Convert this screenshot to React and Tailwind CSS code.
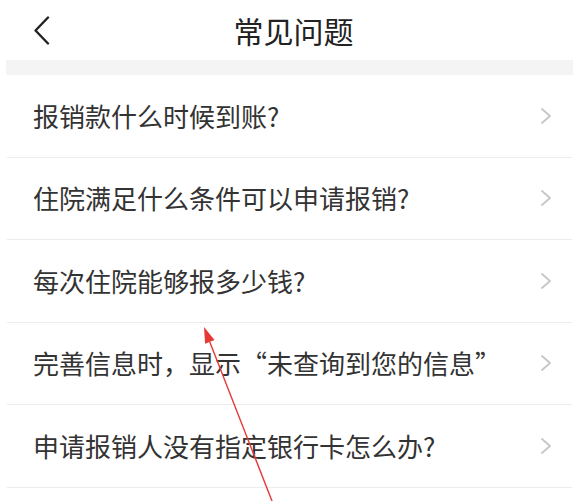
import React from "react";

const questions = [
  "报销款什么时候到账?",
  "住院满足什么条件可以申请报销?",
  "每次住院能够报多少钱?",
  "完善信息时，显示“未查询到您的信息”",
  "申请报销人没有指定银行卡怎么办?",
];

function Chevron() {
  return (
    <svg width="12" height="18" viewBox="0 0 12 18" fill="none">
      <path d="M2 2 L10 9 L2 16" stroke="#c6c6c6" strokeWidth="1.8" strokeLinecap="round" strokeLinejoin="round" />
    </svg>
  );
}

export default function App() {
  return (
    <div
      className="relative w-[579px] h-[501px] bg-white overflow-hidden"
      style={{ fontFamily: '"Noto Sans CJK SC", "Noto Sans", sans-serif' }}
    >
      {/* header */}
      <div className="h-[60px] flex items-center px-[33px]">
        <svg width="17" height="29" viewBox="0 0 17 29" fill="none">
          <path d="M15 1.5 L2.5 14.5 L15 27.5" stroke="#222" strokeWidth="2.4" strokeLinecap="round" strokeLinejoin="round" />
        </svg>
        <div className="flex-1 text-center pl-2 text-[30px] leading-none text-[#222]">常见问题</div>
        <div className="w-[17px]" />
      </div>

      <div className="mx-[6px] h-[15px] bg-[#f4f4f4]" />

      <div className="mx-[7px]">
        {questions.map((q) => (
          <div key={q} className="h-[82.5px] flex items-center justify-between pl-[26px] pr-[20px] border-b border-[#ececec]">
            <span className="text-[26px] leading-none text-[#333] whitespace-nowrap">{q}</span>
            <Chevron />
          </div>
        ))}
      </div>

      {/* red annotation arrow */}
      <svg className="absolute inset-0 pointer-events-none" width="579" height="501" viewBox="0 0 579 501">
        <line x1="272" y1="501" x2="209.8" y2="341.9" stroke="#e53935" strokeWidth="1.4" />
        <polygon points="204,327 214.5,340.1 205.1,343.7" fill="#e53935" />
      </svg>
    </div>
  );
}
